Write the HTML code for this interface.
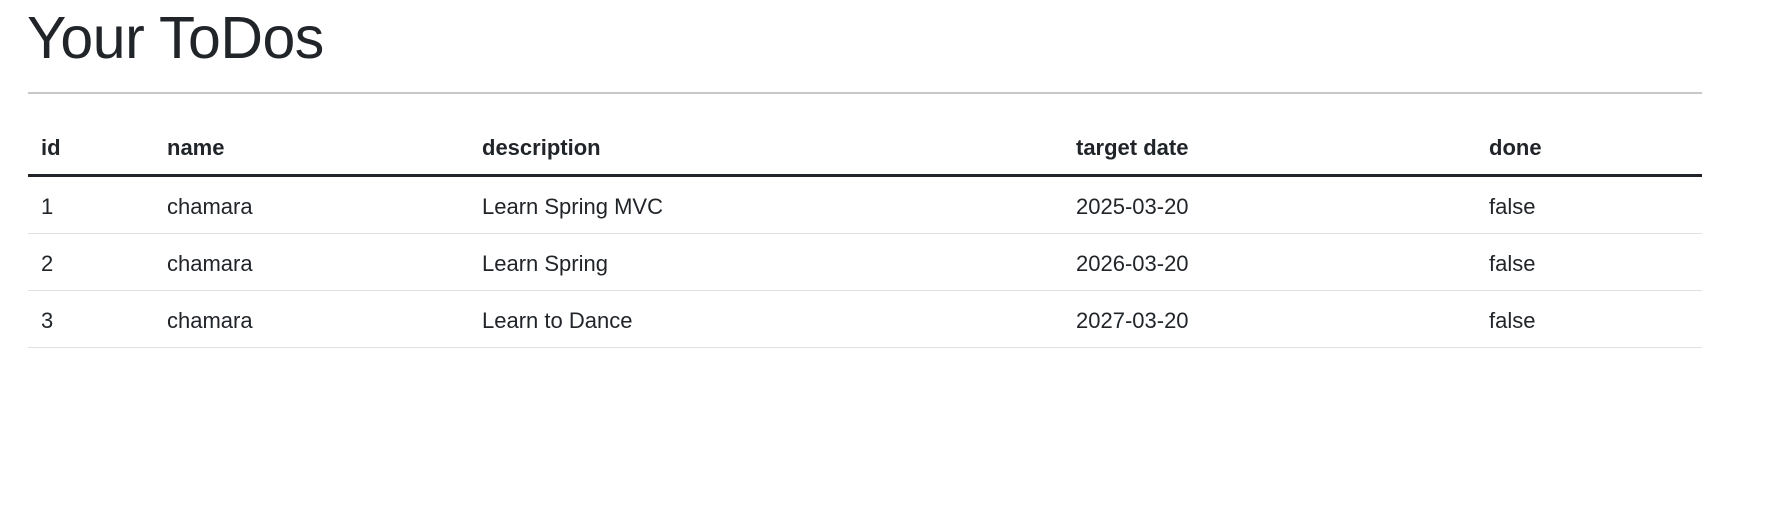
<!DOCTYPE html>
<html><head><meta charset="utf-8"><style>
html,body{margin:0;padding:0;background:#fff;width:1777px;height:513px;overflow:hidden}
body{font-family:"Liberation Sans",sans-serif;color:#212529}
h1{position:absolute;left:27px;top:1px;margin:0;font-weight:normal;font-size:59px;line-height:74px;letter-spacing:-0.5px}
.hr{position:absolute;left:28px;top:92px;width:1674px;height:2px;background:#c8c8c8}
table{position:absolute;left:28px;top:119px;width:1674px;border-collapse:collapse;font-size:22px}
th,td{text-align:left;padding:3px 13px 0;vertical-align:middle}
th{font-weight:bold;height:52px;border-bottom:3px solid #212529}
td{height:53px;border-bottom:1px solid #dee2e6}
</style></head><body>
<h1>Your ToDos</h1>
<div class="hr"></div>
<table>
<colgroup><col style="width:126px"><col style="width:315px"><col style="width:594px"><col style="width:413px"><col></colgroup>
<thead><tr><th>id</th><th>name</th><th>description</th><th>target date</th><th>done</th></tr></thead>
<tbody>
<tr><td>1</td><td>chamara</td><td>Learn Spring MVC</td><td>2025-03-20</td><td>false</td></tr>
<tr><td>2</td><td>chamara</td><td>Learn Spring</td><td>2026-03-20</td><td>false</td></tr>
<tr><td>3</td><td>chamara</td><td>Learn to Dance</td><td>2027-03-20</td><td>false</td></tr>
</tbody></table>
</body></html>
